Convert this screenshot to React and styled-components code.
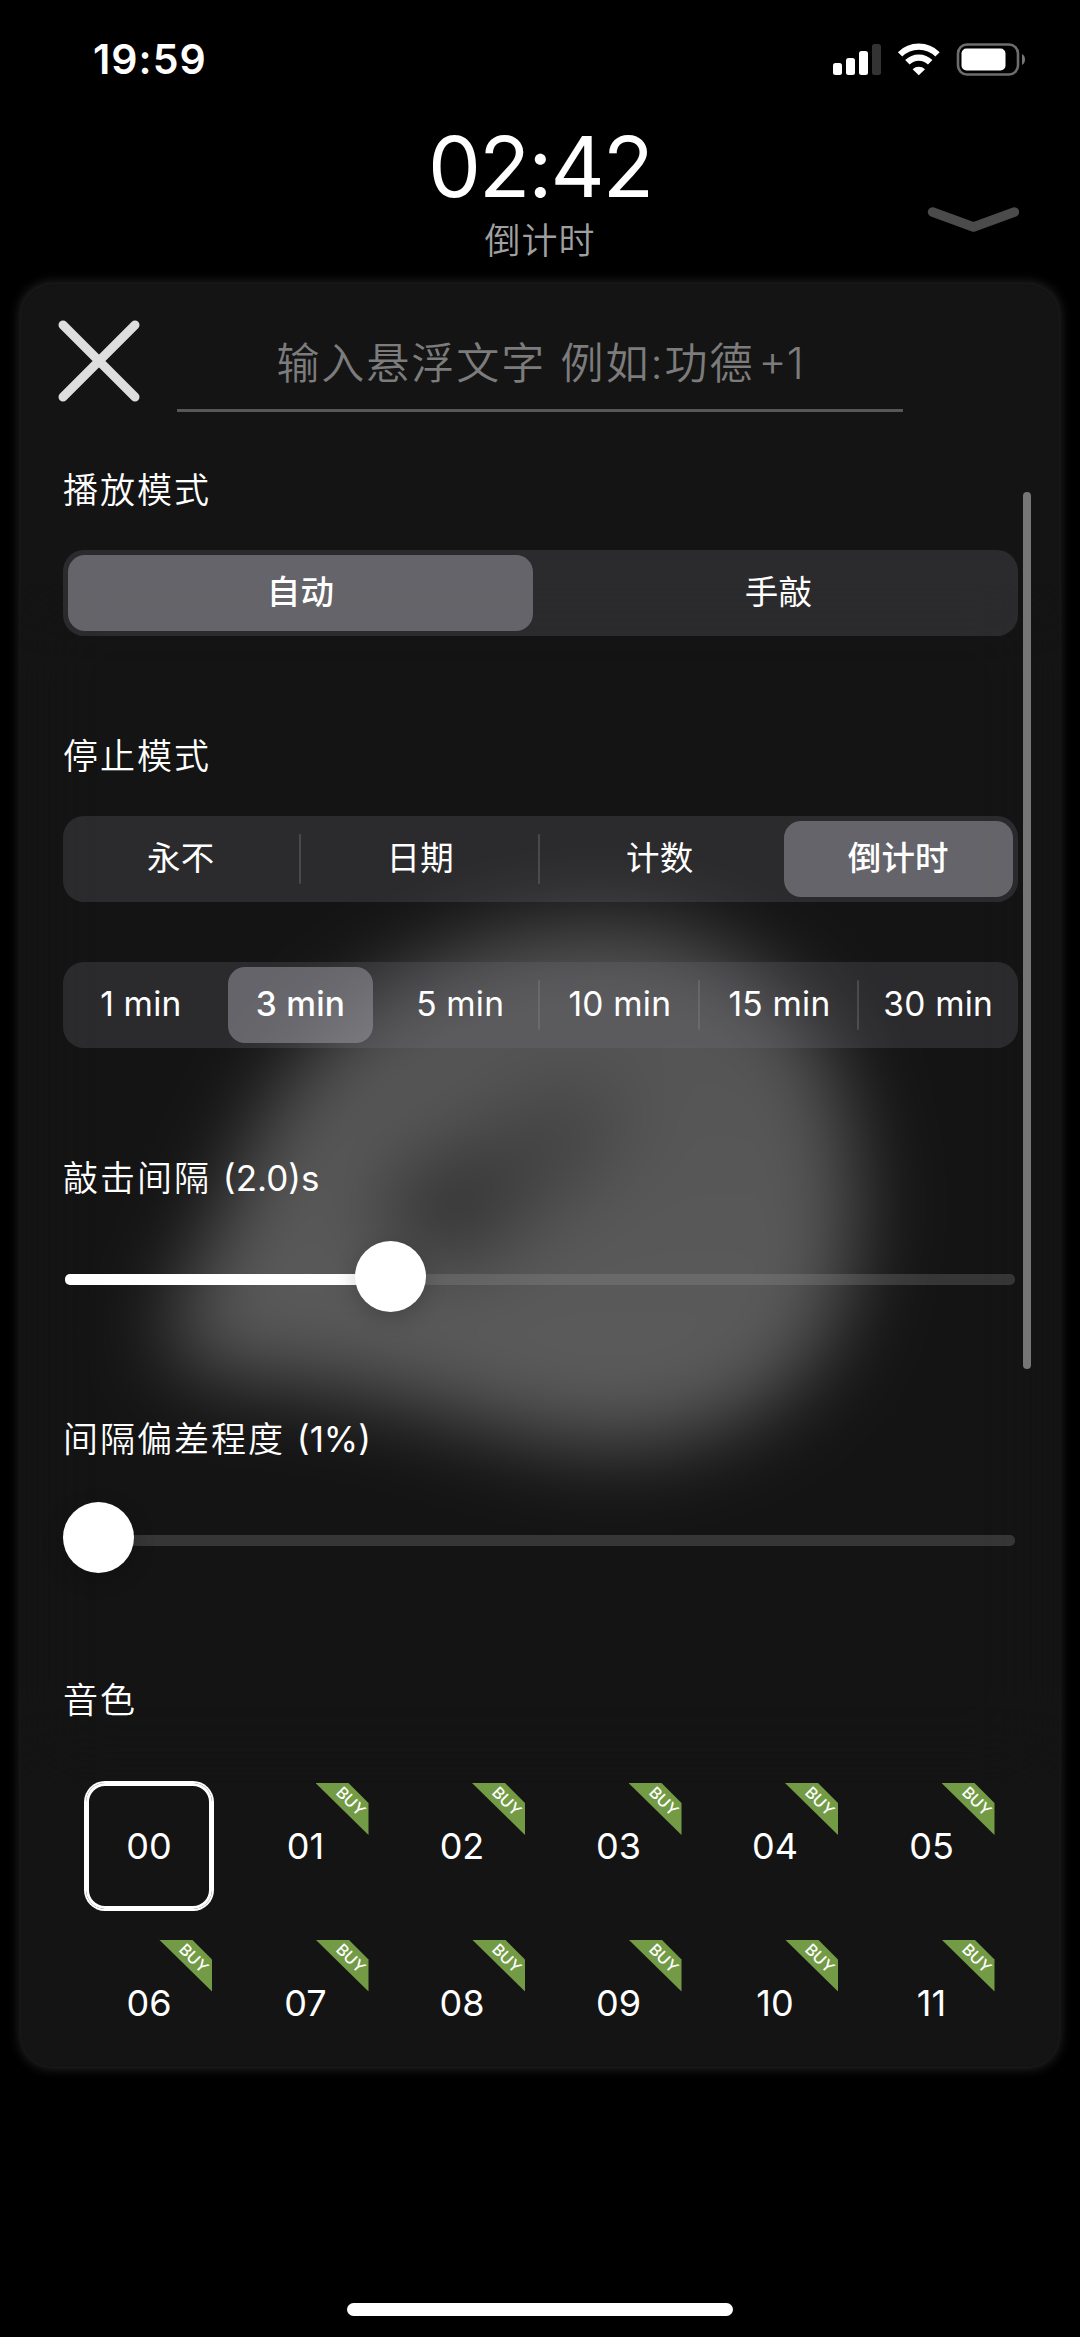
import React, {useState} from 'react';
import styled, {createGlobalStyle} from 'styled-components';

const sounds = ['00', '01', '02', '03', '04', '05', '06', '07', '08', '09', '10', '11'];

const Segmented = ({ options, initial }) => {
    const [selected, setSelected] = useState(initial);

    return (
        <Track>
            <Options>
                {options.map((option, i) => (
                    <Option
                        key={option}
                        $last={i === options.length - 1}
                        onClick={() => setSelected(i)}
                    >
                        <Pill $active={i === selected}>{option}</Pill>
                        {i < options.length - 1 && i !== selected && i + 1 !== selected && <Divider />}
                    </Option>
                ))}
            </Options>
        </Track>
    );
}

const Slider = ({ value }) => (
    <SliderBox>
        <Rail>
            <Fill style={{ width: `${value}px` }} />
        </Rail>
        <Knob style={{ left: `${value}px` }} />
    </SliderBox>
);

const StatusIcons = () => (
    <svg width="194" height="34" viewBox="0 0 194 34" fill="#fff">
        <rect x="1" y="21" width="9" height="12" rx="2.5" />
        <rect x="14" y="16" width="9" height="17" rx="2.5" />
        <rect x="27" y="9" width="9" height="24" rx="2.5" />
        <rect x="40" y="2" width="9" height="31" rx="2.5" fill="#333" />
        <g fill="none" stroke="#fff" strokeWidth="6.2">
            <path d="M68.1 12.4A26.6 26.6 0 0 1 105.5 12.4" />
            <path d="M75.4 20.3A16 16 0 0 1 98.2 20.3" />
        </g>
        <path d="M86.8 33.2L80.6 27.2A9.2 9.2 0 0 1 93 27.2Z" />
        <rect x="126" y="2.5" width="60" height="30" rx="9" fill="none" stroke="#6d6d6d" strokeWidth="2.6" />
        <rect x="129.5" y="6.5" width="44" height="22" rx="5" />
        <path d="M190 12C194 14 194 21 190 23Z" fill="#777" />
    </svg>
);

const App = () => {
    const [sound, setSound] = useState('00');

    return (
        <Page>
            <GlobalStyle />
            <StatusBar>
                <Clock>19:59</Clock>
                <StatusIcons />
            </StatusBar>
            <Timer>
                <Time>02:42</Time>
                <Caption>倒计时</Caption>
                <Collapse>
                    <svg width="92" height="26" viewBox="0 0 92 26">
                        <path d="M5.5 5L46.5 20L87.5 5" fill="none" stroke="#4b4b4b" strokeWidth="9.4" strokeLinecap="round" strokeLinejoin="round" />
                    </svg>
                </Collapse>
            </Timer>
            <Panel>
                <Backdrop viewBox="0 0 1040 1786">
                    <defs>
                        <linearGradient id="body" x1="0" y1="0" x2="0" y2="1">
                            <stop offset="0" stopColor="#535353" />
                            <stop offset="1" stopColor="#5c5c5c" />
                        </linearGradient>
                        <filter id="soft" filterUnits="userSpaceOnUse" x="0" y="300" width="1040" height="1200" colorInterpolationFilters="sRGB">
                            <feGaussianBlur stdDeviation="42" />
                        </filter>
                    </defs>
                    {/* the opaque rect keeps the blurred edge from turning black */}
                    <g filter="url(#soft)">
                        <rect x="0" y="300" width="1040" height="1200" fill="#141414" />
                        <path
                            fill="url(#body)"
                            d="M390 690C450 655 520 640 585 640C660 640 715 670 755 705C805 750 820 790 830 850C840 900 838 950 828 1000C818 1045 800 1080 760 1110C710 1150 640 1166 574 1162C500 1157 430 1128 354 1112C300 1102 250 1095 190 1090C145 1080 140 1050 165 1005C195 950 210 910 228 870C255 800 310 735 390 690Z"
                        />
                        <ellipse cx="485" cy="890" rx="135" ry="50" opacity=".26" transform="rotate(-32 485 890)" />
                        <ellipse cx="425" cy="930" rx="62" ry="46" opacity=".3" />
                    </g>
                </Backdrop>
                <Header>
                    <svg width="84" height="84" viewBox="0 0 84 84">
                        <path d="M6 6L78 78M78 6L6 78" stroke="#dedede" strokeWidth="9" strokeLinecap="round" />
                    </svg>
                    <Field>输入悬浮文字 例如:功德<span>+1</span></Field>
                </Header>
                <Label $top={53}>播放模式</Label>
                <Segmented options={['自动', '手敲']} initial={0} />
                <Label $top={95}>停止模式</Label>
                <Segmented options={['永不', '日期', '计数', '倒计时']} initial={3} />
                <Spacer />
                <Segmented options={['1 min', '3 min', '5 min', '10 min', '15 min', '30 min']} initial={1} />
                <Label $top={105}>敲击间隔 <small>(2.0)s</small></Label>
                <Slider value={292} />
                <Label $top={102}>间隔偏差程度 <small>(1%)</small></Label>
                <Slider value={0} />
                <Label $top={102}>音色</Label>
                <Grid>
                    {sounds.map((name) => (
                        <Tile key={name} $active={name === sound} onClick={() => setSound(name)}>
                            {name}
                            {name !== '00' && <Ribbon><Buy>BUY</Buy></Ribbon>}
                        </Tile>
                    ))}
                </Grid>
                <Scrollbar />
            </Panel>
            <HomeIndicator />
        </Page>
    );
}

const GlobalStyle = createGlobalStyle`
    * {
        box-sizing: border-box;
    }

    body {
        margin: 0;
        background: #000;
    }
`;

const Page = styled.div`
    width: 1080px;
    height: 2337px;
    overflow: hidden;
    display: flex;
    flex-direction: column;
    background: #000;
    color: #fff;
    font-family: Inter, "Noto Sans CJK SC", sans-serif;
`;

const StatusBar = styled.div`
    height: 118px;
    padding: 0 54px 0 93px;
    display: flex;
    align-items: center;
    justify-content: space-between;
`;

const Clock = styled.span`
    font-size: 41px;
    font-weight: 600;
    letter-spacing: 1px;
`;

const Timer = styled.div`
    position: relative;
    height: 164px;
    display: flex;
    flex-direction: column;
    align-items: center;
`;

const Time = styled.div`
    margin-top: 4px;
    font-size: 84px;
    line-height: 90px;
    letter-spacing: -2px;
`;

const Caption = styled.div`
    margin-top: 4px;
    font-size: 36px;
    line-height: 50px;
    letter-spacing: 1px;
    font-weight: 350;
    color: #a0a0a0;
`;

const Collapse = styled.div`
    position: absolute;
    right: 61px;
    top: 89px;
    line-height: 0;
`;

const Panel = styled.div`
    position: relative;
    isolation: isolate;
    height: 1785px;
    margin: 1px 20px 0;
    padding: 0 42px 0 43px;
    border-radius: 32px;
    background: #141414;
    box-shadow: inset 0 0 2px 1px #1a1a1a, 0 0 12px 0 #2b2b2b;
`;

const Backdrop = styled.svg`
    position: absolute;
    left: 0;
    top: 0;
    width: 1040px;
    height: 1786px;
    z-index: -1;
`;

const Header = styled.div`
    display: flex;
    height: 129px;
    margin-left: -6px;

    > svg {
        margin-top: 36px;
    }
`;

const Field = styled.div`
    width: 726px;
    margin-left: 36px;
    padding-top: 55px;
    border-bottom: 3px solid #575757;
    text-align: center;
    font-size: 43px;
    font-weight: 350;
    line-height: 50px;
    letter-spacing: 2px;
    color: #7c7c7c;
    white-space: nowrap;

    span {
        margin-left: 4px;
        letter-spacing: 0;
    }
`;

const Label = styled.div`
    height: 50px;
    margin-top: ${(props) => props.$top}px;
    font-size: 35px;
    font-weight: 350;
    line-height: 50px;
    letter-spacing: 2px;

    small {
        font-size: 35px;
        font-weight: 400;
        letter-spacing: 0;
    }
`;

const Track = styled.div`
    margin-top: 35px;
    height: 86px;
    border-radius: 21px;
    background: rgba(118, 118, 128, .24);
`;

const Options = styled.div`
    display: grid;
    grid-auto-flow: column;
    grid-auto-columns: minmax(0, 1fr);
    height: 100%;
    margin-left: -3px;
`;

const Option = styled.div`
    position: relative;
    display: flex;
    padding: ${(props) => props.$last ? '5px' : '5px 6px 5px 8px'};
    cursor: pointer;
`;

const Pill = styled.div`
    flex: 1;
    border-radius: 17px;
    font-size: 33.5px;
    line-height: 75px;
    letter-spacing: .2px;
    text-align: center;
    white-space: nowrap;
    font-weight: ${(props) => props.$active ? 500 : 400};
    background: ${(props) => props.$active ? 'rgba(158, 158, 165, .5)' : 'transparent'};
`;

const Divider = styled.span`
    position: absolute;
    right: -1px;
    top: 18px;
    width: 2px;
    height: 50px;
    border-radius: 1px;
    background: rgba(142, 142, 147, .3);
`;

const Spacer = styled.div`
    height: 25px;
`;

const SliderBox = styled.div`
    position: relative;
    height: 71px;
    margin-top: 38px;
    padding: 33px 3px 0 2px;
`;

const Rail = styled.div`
    height: 11px;
    border-radius: 5px;
    background: rgba(155, 155, 158, .25);
    overflow: hidden;
`;

const Fill = styled.div`
    height: 100%;
    background: #fff;
`;

const Knob = styled.div`
    position: absolute;
    top: 0;
    width: 71px;
    height: 71px;
    border-radius: 50%;
    background: #fff;
    box-shadow: 0 6px 22px rgba(0, 0, 0, .2);
`;

const Grid = styled.div`
    margin: 58px 0 0 23px;
    display: grid;
    grid-template-columns: repeat(6, 126px);
    grid-auto-rows: 126px;
    gap: 30.5px;
`;

const Tile = styled.div`
    position: relative;
    display: flex;
    align-items: center;
    justify-content: center;
    border-radius: 19px;
    font-size: 36px;
    cursor: pointer;
    box-shadow: ${(props) => props.$active ? 'inset 0 0 0 3px #fff, 0 0 0 2px #fff' : 'none'};
`;

const Ribbon = styled.div`
    position: absolute;
    right: 0;
    top: 0;
    width: 53px;
    height: 52px;
    background: #739b45;
    clip-path: polygon(0 0, 33px 0, 53px 20px, 53px 52px);
`;

const Buy = styled.span`
    position: absolute;
    left: 15px;
    top: 8px;
    width: 40px;
    line-height: 20px;
    text-align: center;
    font-size: 16px;
    font-weight: 500;
    transform: rotate(45deg);
`;

const Scrollbar = styled.div`
    position: absolute;
    right: 29px;
    top: 209px;
    width: 8px;
    height: 877px;
    border-radius: 4px;
    background: #767676;
`;

const HomeIndicator = styled.div`
    width: 386px;
    height: 13px;
    margin: 235px auto 0;
    border-radius: 7px;
    background: #fff;
`;

export default App;
